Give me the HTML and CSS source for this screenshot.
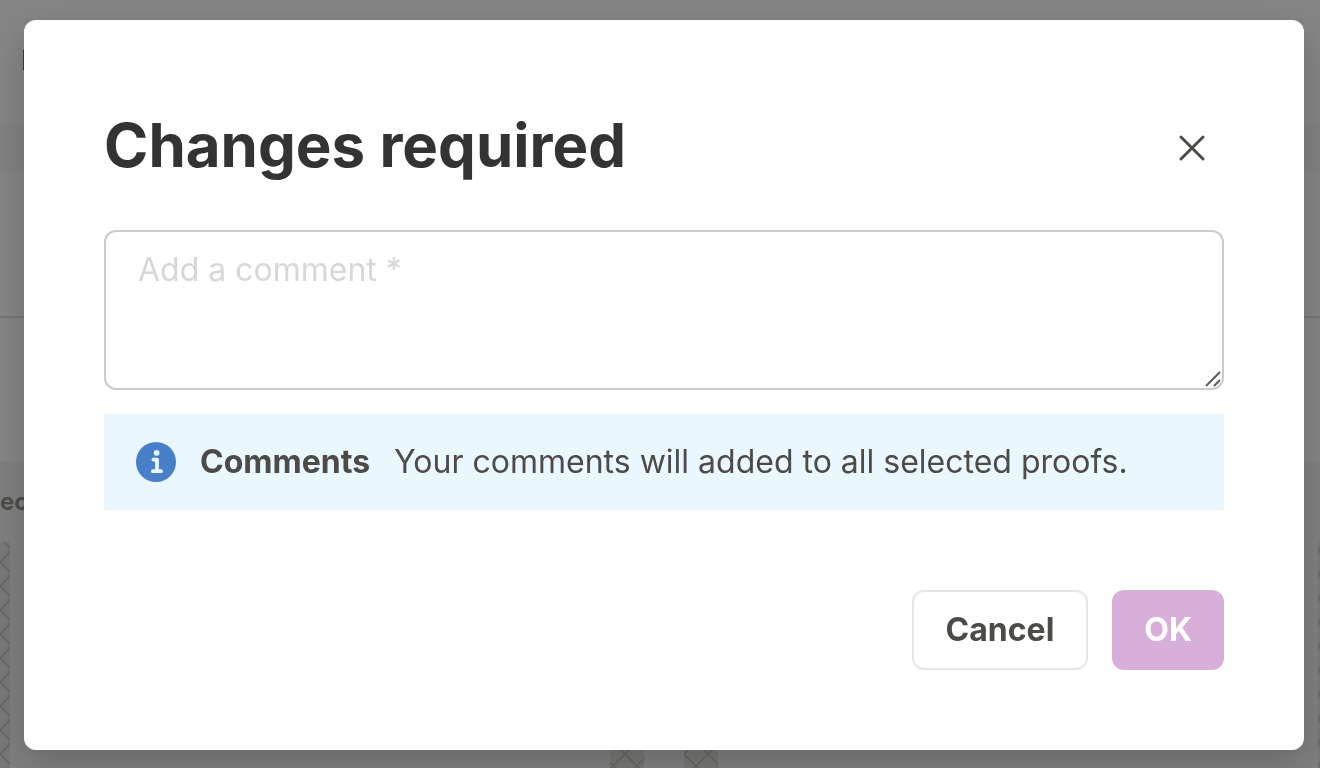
FILE: index.html
```
<!DOCTYPE html>
<html lang="en">

<head>
    <meta charset="UTF-8">
    <meta name="viewport" content="width=device-width, initial-scale=1.0">
    <title>Changes required</title>
    <link rel="stylesheet" href="styles.css">
</head>

<body>
    <div class="page">
        <div class="page-header">
            <div class="page-logo"></div>
        </div>
        <div class="page-nav"></div>
        <div class="page-summary"></div>
        <div class="page-filters"></div>
        <div class="page-proofs">
            <p class="proofs-label">ected</p>
            <div class="proofs-row">
                <div class="proof proof-first"></div>
                <div class="proof-pair">
                    <div class="proof"></div>
                    <div class="proof"></div>
                </div>
                <div class="proof proof-last"></div>
            </div>
        </div>
    </div>

    <div class="overlay">
        <form class="modal" role="dialog" aria-modal="true" aria-labelledby="modal-title">
            <div class="modal-header">
                <h1 id="modal-title">Changes required</h1>
                <button type="button" class="close" aria-label="Close">
                    <svg width="28" height="28" viewBox="0 0 28 28" fill="none" stroke="#4c4b48" stroke-width="3" stroke-linecap="round">
                        <path d="M3 3 25 25M25 3 3 25" />
                    </svg>
                </button>
            </div>

            <div class="comment-box">
                <textarea class="comment" aria-label="Comment" placeholder="Add a comment *"></textarea>
                <svg class="grip" width="16" height="16" viewBox="0 0 16 16" fill="none" stroke="#5b5b5d" stroke-width="2">
                    <path d="M1 15 15 1M9 15 15 9" />
                </svg>
            </div>

            <div class="notice">
                <svg class="notice-icon" width="40" height="40" viewBox="0 0 40 40">
                    <circle cx="20" cy="20" r="20" fill="#4780c8" />
                    <circle cx="20.7" cy="10.8" r="2.9" fill="#ebf7fe" />
                    <path d="M17.4 17.6H21V29.2M16.9 29.2H25" fill="none" stroke="#ebf7fe" stroke-width="3.8" stroke-linecap="round" stroke-linejoin="round" />
                </svg>
                <strong>Comments</strong>
                <span>Your comments will added to all selected proofs.</span>
            </div>

            <div class="modal-footer">
                <button type="button" class="btn">Cancel</button>
                <button type="submit" class="btn btn-primary" disabled>OK</button>
            </div>
        </form>
    </div>
</body>

</html>
```

FILE: styles.css
```
* {
    box-sizing: border-box;
}

body {
    margin: 0;
    font-family: Inter, "Liberation Sans", sans-serif;
    font-size: 32px;
    line-height: 48px;
    color: #4c4b48;
}

/* Page behind the modal */
.page {
    display: flex;
    flex-direction: column;
    height: 100vh;
    overflow: hidden;
    background-color: #ffffff;
}

.page-header {
    height: 124px;
    padding: 50px 23px;
}

.page-logo {
    width: 20px;
    height: 20px;
    background-color: #777777;
}

.page-nav {
    height: 48px;
    background-color: #f9f9f9;
}

.page-summary {
    height: 146px;
    border-bottom: 2px solid #e2e2e2;
}

.page-filters {
    height: 144px;
}

.page-proofs {
    flex: 1;
    display: flex;
    flex-direction: column;
    background-color: #f4f4f4;
}

.proofs-label {
    margin: 0;
    font-size: 24px;
    font-weight: 700;
    line-height: 80px;
    color: #94948e;
}

.proofs-row {
    flex: 1;
    display: flex;
    justify-content: space-between;
}

.proof-pair {
    display: flex;
    gap: 40px;
}

.proof {
    width: 34px;
    background-color: #e5e5e3;
    background-image:
        linear-gradient(45deg, transparent 46%, #cbcbc6 46%, #cbcbc6 54%, transparent 54%),
        linear-gradient(-45deg, transparent 46%, #cbcbc6 46%, #cbcbc6 54%, transparent 54%);
    background-size: 24px 24px;
    background-position: 3px 8px;
}

.proof-pair .proof + .proof {
    background-position: 12px 8px;
}

.proof-first {
    width: 10px;
    background-position: -12px 8px;
}

.proof-last {
    width: 2px;
}

.overlay {
    position: fixed;
    inset: 0;
    padding: 20px 16px 18px 24px;
    background-color: rgba(0, 0, 0, 0.48);
    overflow: hidden;
}

/* Modal */
.modal {
    padding: 80px;
    border-radius: 12px;
    background-color: #ffffff;
    box-shadow: 0 12px 36px rgba(0, 0, 0, 0.2);
}

.modal-header {
    display: flex;
    align-items: flex-start;
    justify-content: space-between;
    margin-bottom: 40px;
}

.modal-header h1 {
    margin: 0;
    font-size: 60px;
    font-weight: 700;
    line-height: 90px;
    color: #333333;
}

.close {
    display: flex;
    padding: 34px 18px 28px;
    border: none;
    background: none;
    cursor: pointer;
}

.comment-box {
    position: relative;
    margin-bottom: 24px;
}

.comment {
    display: block;
    width: 100%;
    height: 160px;
    padding: 14px 32px;
    border: 2px solid #cbccc7;
    border-radius: 12px;
    background-color: #ffffff;
    font: inherit;
    color: inherit;
    resize: none;
}

.comment::placeholder {
    color: #d7d7d7;
}

.grip {
    position: absolute;
    right: 3px;
    bottom: 3px;
}

.notice {
    display: flex;
    align-items: center;
    gap: 24px;
    margin-bottom: 80px;
    padding: 24px 32px;
    background-color: #ebf7fe;
}

.notice-icon {
    flex: none;
}

.notice strong {
    font-weight: 700;
}

.modal-footer {
    display: flex;
    justify-content: flex-end;
    gap: 24px;
}

.btn {
    height: 80px;
    padding: 0 32px;
    border: 2px solid #e5e5e5;
    border-radius: 12px;
    background-color: #ffffff;
    font: inherit;
    font-weight: 700;
    color: #4c4b48;
    cursor: pointer;
}

.btn-primary {
    padding: 0 30px;
    border-color: #d8afd8;
    background-color: #d8afd8;
    color: #ffffff;
}
```
